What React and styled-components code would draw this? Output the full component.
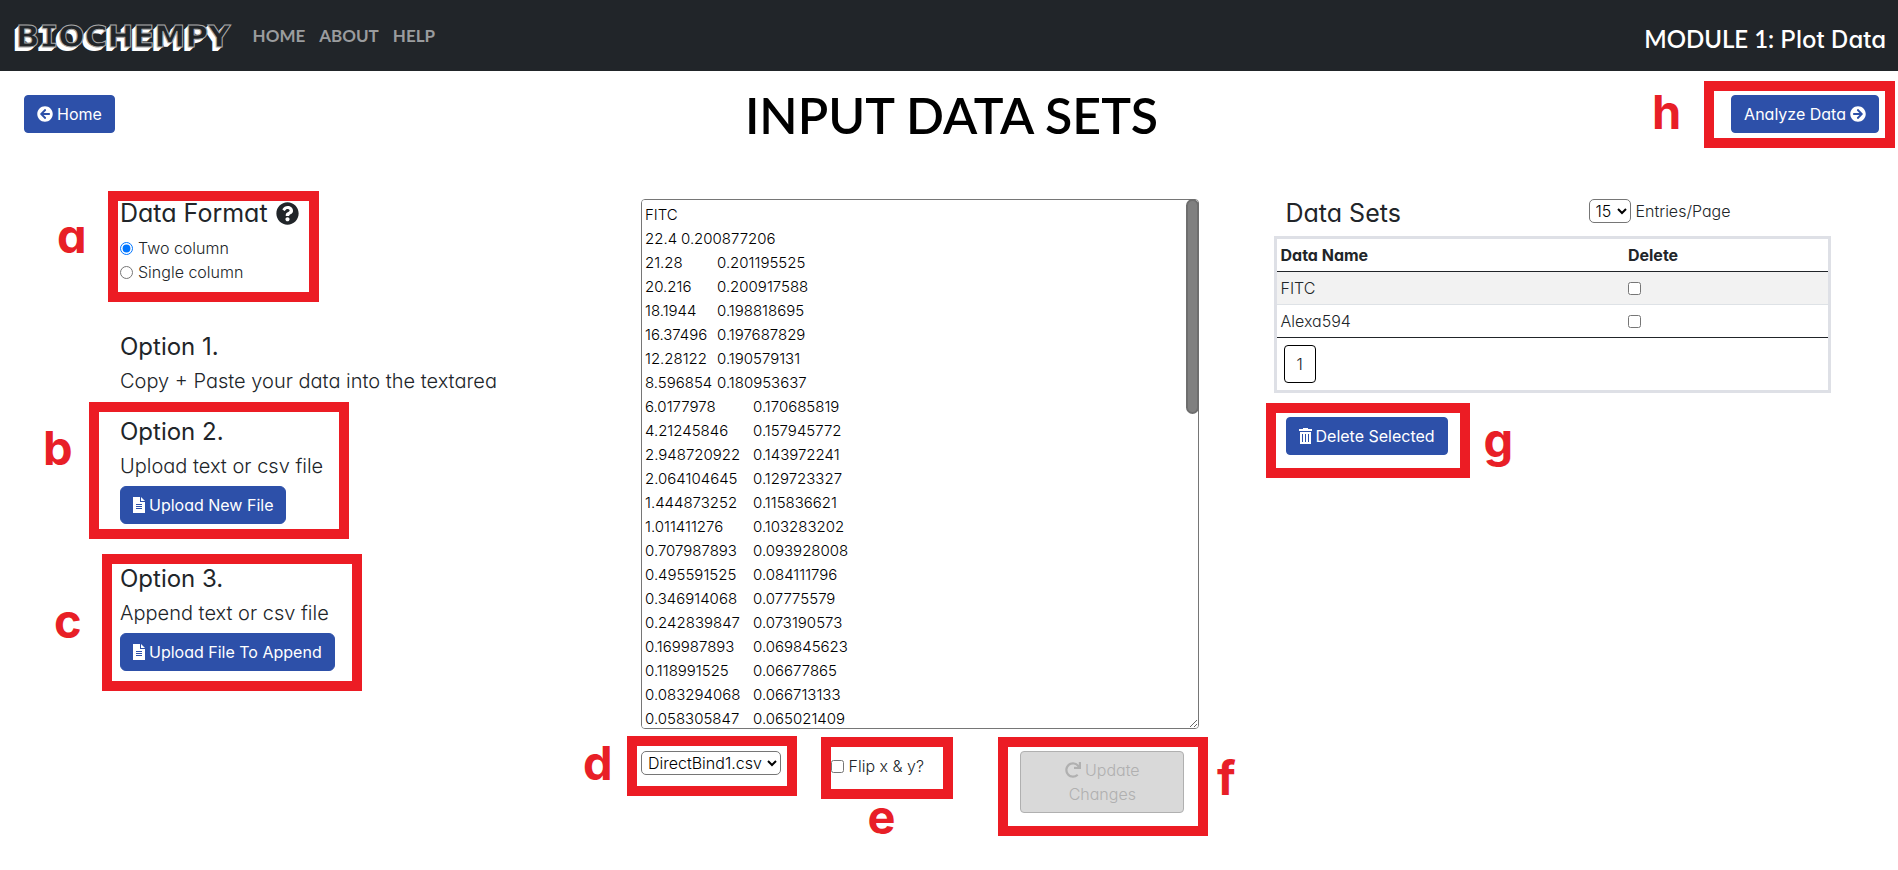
import React, { useState } from "react";
import styled, { createGlobalStyle } from "styled-components";
import { FaArrowCircleLeft, FaArrowCircleRight, FaQuestionCircle, FaRedo } from "react-icons/fa";

const GlobalStyle = createGlobalStyle`
  * {
    box-sizing: border-box;
  }
  body {
    margin: 0;
    background: #fff;
    color: #212529;
    font-family: Inter, "Liberation Sans", sans-serif;
    font-size: 16px;
    font-weight: 300;
    line-height: 24px;
    font-feature-settings: "cv11";
  }
  input, select, button, textarea {
    font-family: inherit;
    font-size: inherit;
    font-weight: inherit;
    font-feature-settings: inherit;
    margin: 0;
  }
`;

const Nav = styled.nav`
  display: flex;
  align-items: center;
  min-height: 71px;
  padding: 0 12px 0 16px;
  background: #212529;
`;
const Brand = styled.a`
  margin-right: 22px;
  color: #212529;
  font: bold 31px/40px "DejaVu Sans", sans-serif;
  text-decoration: none;
  -webkit-text-stroke: 1px #a8a8a8;
  text-shadow: -1px 1px #fff, -2px 2px #fff, -3px 3px #fff, -4px 4px #fff;

  span {
    font-family: "DejaVu Sans Mono", monospace;
  }
`;
const NavLink = styled.a`
  margin-right: 14px;
  color: #9a9c9e;
  font: bold 17px/24px Lato, sans-serif;
  text-decoration: none;
`;
const ModuleTitle = styled.div`
  margin-left: auto;
  padding-top: 7px;
  color: #fff;
  font-size: 24px;
  font-weight: 500;
  line-height: 30px;

  span {
    font-family: Lato, sans-serif;
    font-weight: 600;
  }
`;

const TopBar = styled.header`
  display: grid;
  grid-template-columns: 1fr auto 1fr;
  align-items: start;
  padding: 24px 19px 0 24px;
`;
const PageTitle = styled.h1`
  margin: 0;
  color: #000;
  font: 600 50px/40px Lato, sans-serif;
`;

const Button = styled.button`
  display: inline-flex;
  align-items: center;
  gap: 4px;
  padding: 6px 12px;
  border: 1px solid #2d50a9;
  border-radius: ${p => (p.$round ? "6px" : "4px")};
  background: #2d50a9;
  color: #fff;
  font-weight: 400;
  line-height: 24px;
  cursor: pointer;
`;
const UpdateButton = styled.button`
  display: block;
  width: 100%;
  padding: 6px 24px;
  border: 1px solid #b0b0b0;
  border-radius: 4px;
  background: #d9d9d9;
  color: #b0b0b0;
  line-height: 24px;

  svg {
    margin-right: 4px;
    vertical-align: -2px;
  }
`;

const Columns = styled.main`
  display: grid;
  grid-template-columns: 4fr 5fr 5fr;
  gap: 75px;
  padding: 64px 67px 24px 120px;
`;
const Heading = styled.h4`
  display: flex;
  align-items: center;
  gap: 8px;
  margin: 0;
  font-size: ${p => (p.$large ? "25px" : "24px")};
  font-weight: 400;
  line-height: 29px;
`;
const Formats = styled.div`
  padding-top: 8px;
`;
const Choice = styled.label`
  display: flex;
  align-items: center;
  gap: 5px;
`;
const Option = styled.section`
  display: flex;
  flex-direction: column;
  align-items: flex-start;
  gap: 5px;
  margin-top: ${p => p.$space};
`;
const Lead = styled.p`
  margin: 0;
  font-size: 20px;
  line-height: 30px;
`;

const DataArea = styled.div`
  position: relative;
`;
const DataText = styled.textarea`
  display: block;
  width: 100%;
  height: 530px;
  padding: 3px;
  border: 1px solid #767676;
  border-radius: 4px;
  color: #000;
  font-size: 15px;
  line-height: 24px;
  tab-size: 36px;
  scrollbar-width: none;
`;
const ScrollThumb = styled.div`
  position: absolute;
  top: 0;
  right: 0;
  width: 13px;
  border: 2px solid #6e6e6e;
  border-radius: 8px;
  background: #808080;
  pointer-events: none;
`;
const Controls = styled.div`
  display: grid;
  grid-template-columns: 34% 34% 32%;
  align-items: start;
  padding-top: 22px;
`;
const FlipCell = styled.div`
  padding-top: 3px;
`;
const UpdateCell = styled.div`
  padding-right: 14px;
`;
const Select = styled.select`
  height: 24px;
  padding: 0 2px;
  border: 1px solid #767676;
  border-radius: 5px;
  background: #fff;
  color: #000;
`;

const TableHead = styled.div`
  display: grid;
  grid-template-columns: 303px auto;
  justify-content: start;
  padding-left: 12px;
`;
const PageSize = styled.label`
  display: flex;
  align-items: flex-start;
  gap: 5px;
`;
const TableBox = styled.div`
  margin: 8px 0 24px;
  border: 3px solid #dee0e6;
`;
const Table = styled.table`
  width: 100%;
  border-collapse: collapse;
  border-bottom: 1px solid #212529;

  th, td {
    padding: 4px;
    text-align: left;
  }
  th {
    width: 63%;
    border-bottom: 1px solid #212529;
    font-weight: 700;
  }
  th + th {
    width: 37%;
  }
  td {
    border-bottom: 1px solid #dee2e6;
  }
  tbody tr:nth-child(odd) {
    background: #f2f2f2;
  }
  tbody tr:last-child td {
    border-bottom: 0;
  }
  input {
    display: block;
  }
`;
const PageButton = styled.button`
  display: block;
  margin: 7px;
  padding: 6px 12px;
  border: 1px solid #000;
  border-radius: 4px;
  background: #fff;
  color: #212529;
  line-height: 24px;
`;
const DeleteArea = styled.div`
  padding-left: 12px;
`;

// red callouts, placed from the top left corner of the part they wrap
const Marked = styled.div`
  position: relative;
  width: ${p => (p.$fill ? "auto" : "fit-content")};
  justify-self: ${p => (p.$end ? "end" : "auto")};
`;
const Frame = styled.div`
  position: absolute;
  left: ${p => p.$x}px;
  top: ${p => p.$y}px;
  width: ${p => p.$w}px;
  height: ${p => p.$h}px;
  border: 10px solid #ec1c24;
  pointer-events: none;
`;
const Letter = styled.span`
  position: absolute;
  left: ${p => p.$x}px;
  top: ${p => p.$y}px;
  color: #e81f27;
  font-size: 47px;
  font-weight: 700;
  line-height: 47px;
`;

const Callout = ({ letter, frame, at, fill, end, children }) => (
  <Marked $fill={fill} $end={end}>
    {children}
    <Frame $x={frame[0]} $y={frame[1]} $w={frame[2]} $h={frame[3]} />
    <Letter $x={at[0]} $y={at[1]}>{letter}</Letter>
  </Marked>
);

const TrashIcon = () => (
  <svg width="13" height="16" viewBox="0 0 13 16" fill="none" aria-hidden="true">
    <path d="M0 1h4V0h5v1h4v2H0z" fill="#fff" />
    <path d="M1 4h11v12H1z" fill="#fff" />
    <path d="M3.5 6v8M6.5 6v8M9.5 6v8" stroke="#2d50a9" />
  </svg>
);
const FileIcon = () => (
  <svg width="12" height="16" viewBox="0 0 12 16" fill="none" aria-hidden="true">
    <path d="M0 0h7v5h5v11H0z" fill="#fff" />
    <path d="M8 0l4 4H8z" fill="#fff" />
    <path d="M3 7.5h6M3 9.5h6M3 11.5h6" stroke="#2d50a9" />
  </svg>
);

const READINGS = [
  ["22.4", "0.200877206"],
  ["21.28", "0.201195525"],
  ["20.216", "0.200917588"],
  ["18.1944", "0.198818695"],
  ["16.37496", "0.197687829"],
  ["12.28122", "0.190579131"],
  ["8.596854", "0.180953637"],
  ["6.0177978", "0.170685819"],
  ["4.21245846", "0.157945772"],
  ["2.948720922", "0.143972241"],
  ["2.064104645", "0.129723327"],
  ["1.444873252", "0.115836621"],
  ["1.011411276", "0.103283202"],
  ["0.707987893", "0.093928008"],
  ["0.495591525", "0.084111796"],
  ["0.346914068", "0.07775579"],
  ["0.242839847", "0.073190573"],
  ["0.169987893", "0.069845623"],
  ["0.118991525", "0.06677865"],
  ["0.083294068", "0.066713133"],
  ["0.058305847", "0.065021409"],
];
const INITIAL_TEXT = "FITC\n" + READINGS.map(r => r.join("\t")).join("\n") + "\n".repeat(32);

const DataBox = () => {
  const [text, setText] = useState(INITIAL_TEXT);
  const [thumb, setThumb] = useState({ top: 0, height: 215 });

  const handleScroll = e => {
    const { scrollTop, scrollHeight, clientHeight } = e.target;
    const ratio = clientHeight / scrollHeight;
    setThumb({ top: scrollTop * ratio, height: clientHeight * ratio });
  };

  return (
    <DataArea>
      <DataText aria-label="Data" value={text} onChange={e => setText(e.target.value)} onScroll={handleScroll} />
      <ScrollThumb style={thumb} />
    </DataArea>
  );
};

export default function App() {
  const [format, setFormat] = useState("two");

  return (
    <>
      <GlobalStyle />
      <Nav>
        <Brand href="#">B<span>I</span>OCHEMPY</Brand>
        <NavLink href="#home">HOME</NavLink>
        <NavLink href="#about">ABOUT</NavLink>
        <NavLink href="#help">HELP</NavLink>
        <ModuleTitle><span>MODULE 1:</span> Plot Data</ModuleTitle>
      </Nav>

      <TopBar>
        <div>
          <Button><FaArrowCircleLeft /> Home</Button>
        </div>
        <PageTitle>INPUT DATA SETS</PageTitle>
        <Callout letter="h" frame={[-27, -14, 191, 67]} at={[-79, -7]} end>
          <Button>Analyze Data <FaArrowCircleRight /></Button>
        </Callout>
      </TopBar>

      <Columns>
        <div>
          <Callout letter="a" frame={[-12, -8, 211, 111]} at={[-63, 13]}>
            <Heading $large>Data Format <FaQuestionCircle size={23} /></Heading>
            <Formats>
              <Choice>
                <input type="radio" name="format" checked={format === "two"} onChange={() => setFormat("two")} />
                Two column
              </Choice>
              <Choice>
                <input type="radio" name="format" checked={format === "single"} onChange={() => setFormat("single")} />
                Single column
              </Choice>
            </Formats>
          </Callout>
          <Option $space="48px">
            <Heading>Option 1.</Heading>
            <Lead>Copy + Paste your data into the textarea</Lead>
          </Option>
          <Option $space="21px">
            <Callout letter="b" frame={[-31, -15, 260, 137]} at={[-77, 7]}>
              <Option>
                <Heading>Option 2.</Heading>
                <Lead>Upload text or csv file</Lead>
                <Button $round><FileIcon /> Upload New File</Button>
              </Option>
            </Callout>
          </Option>
          <Option $space="40px">
            <Callout letter="c" frame={[-18, -10, 260, 137]} at={[-66, 33]}>
              <Option>
                <Heading>Option 3.</Heading>
                <Lead>Append text or csv file</Lead>
                <Button $round><FileIcon /> Upload File To Append</Button>
              </Option>
            </Callout>
          </Option>
        </div>

        <div>
          <DataBox />
          <Controls>
            <Callout letter="d" frame={[-14, -15, 170, 60]} at={[-58, -12]}>
              <Select aria-label="File">
                <option>DirectBind1.csv</option>
              </Select>
            </Callout>
            <FlipCell>
              <Callout letter="e" frame={[-10, -17, 132, 62]} at={[37, 39]}>
                <Choice><input type="checkbox" /> Flip x &amp; y?</Choice>
              </Callout>
            </FlipCell>
            <UpdateCell>
              <Callout letter="f" frame={[-22, -14, 210, 99]} at={[197, 3]} fill>
                <UpdateButton disabled><FaRedo />Update Changes</UpdateButton>
              </Callout>
            </UpdateCell>
          </Controls>
        </div>

        <div>
          <TableHead>
            <Heading $large>Data Sets</Heading>
            <PageSize>
              <Select aria-label="Entries per page">
                <option>15</option>
              </Select>
              Entries/Page
            </PageSize>
          </TableHead>
          <TableBox>
            <Table>
              <thead>
                <tr>
                  <th>Data Name</th>
                  <th>Delete</th>
                </tr>
              </thead>
              <tbody>
                {["FITC", "Alexa594"].map(name => (
                  <tr key={name}>
                    <td>{name}</td>
                    <td><input type="checkbox" aria-label={"Delete " + name} /></td>
                  </tr>
                ))}
              </tbody>
            </Table>
            <PageButton>1</PageButton>
          </TableBox>
          <DeleteArea>
            <Callout letter="g" frame={[-20, -14, 204, 75]} at={[198, -1]}>
              <Button><TrashIcon /> Delete Selected</Button>
            </Callout>
          </DeleteArea>
        </div>
      </Columns>
    </>
  );
}
